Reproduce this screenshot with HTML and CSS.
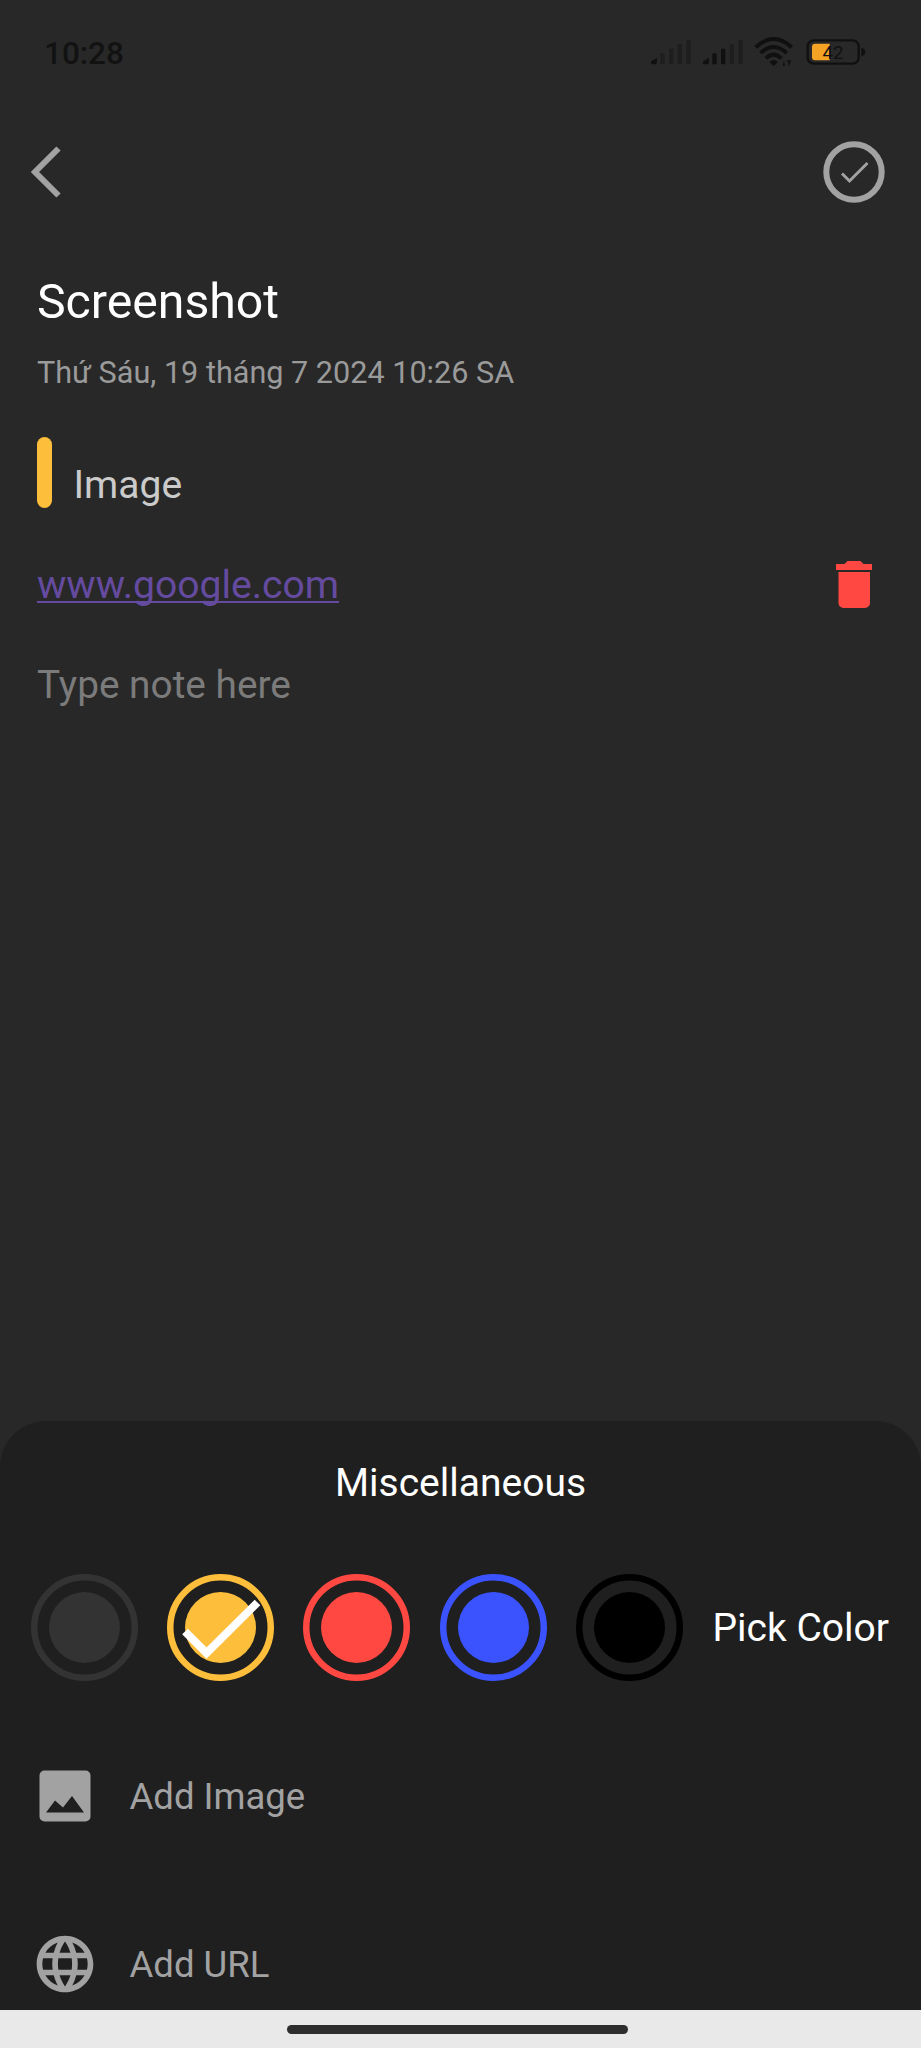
FILE: index.html
```html
<!DOCTYPE html>
<html lang="vi">
<head>
<meta charset="utf-8">
<title>Note</title>
<link rel="stylesheet" href="styles.css">
</head>
<body>
<div class="screen">
  <div class="status">
    <span class="clock">10:28</span>
    <div class="status-icons">
      <svg class="signal" viewBox="0 0 120 78">
        <path class="ink" d="M18 56V70a6 6 0 0 1-6 6H3a6 6 0 0 1-2-9z"/>
        <path class="faint" d="M28 43h13v33H28zM54 29h13v47H54zM80 15h13v61H80zM106 2h13v74h-13z"/>
      </svg>
      <svg class="signal" viewBox="0 0 120 78">
        <path class="ink" d="M18 56V70a6 6 0 0 1-6 6H3a6 6 0 0 1-2-9zM28 43h13v33H28zM54 29h13v47H54z"/>
        <path class="faint" d="M80 15h13v61H80zM106 2h13v74h-13z"/>
      </svg>
      <svg class="wifi" viewBox="0 0 120 90">
        <path class="arc" d="M5 31Q59-19 113 31M20 48Q59 12 98 48M36 64Q59 42 82 64"/>
        <path class="ink" d="M46 75Q59 63 72 75L59 87zM86 87l4-18 3 18zM97 70h14l-6 19-3-13z"/>
      </svg>
      <svg class="battery" viewBox="0 0 178 78">
        <path class="charge" d="M26 14H70V64H26a9 9 0 0 1-9-9V23a9 9 0 0 1 9-9z"/>
        <rect class="shell" x="4" y="4" width="153" height="70" rx="18"/>
        <path class="ink" d="M165 26q12 3 12 13t-12 13z"/>
        <text class="level" x="80" y="60">42</text>
      </svg>
    </div>
  </div>

  <div class="toolbar">
    <svg class="back" viewBox="0 0 30 52"><path d="M27.5 2.5L4 26l23.500 23.500"/></svg>
    <svg class="save" viewBox="0 0 62 62"><circle cx="31" cy="31" r="27.700"/><path d="M19 32.500l7.500 7.500L44.500 22"/></svg>
  </div>

  <div class="note">
    <div class="title">Screenshot</div>
    <div class="date">Thứ Sáu, 19 tháng 7 2024 10:26 SA</div>
    <div class="subtitle"><span class="marker"></span><span class="subtitle-text">Image</span></div>
    <div class="link-row">
      <a class="link">www.google.com</a>
      <svg class="trash" viewBox="0 0 36 47"><path d="M0 3h8.500L11.500 0h13l3 3H36v6H0zM2.500 11H34v31a5 5 0 0 1-5 5H7.500a5 5 0 0 1-5-5z"/></svg>
    </div>
    <div class="placeholder">Type note here</div>
  </div>

  <div class="sheet">
    <div class="sheet-title">Miscellaneous</div>
    <div class="colors">
      <svg class="swatch gray" viewBox="0 0 107 107"><circle class="ring" cx="53.500" cy="53.500" r="50.250"/><circle class="dot" cx="53.500" cy="53.500" r="35.500"/></svg>
      <svg class="swatch yellow" viewBox="0 0 107 107"><circle class="ring" cx="53.500" cy="53.500" r="50.250"/><circle class="dot" cx="53.500" cy="53.500" r="35.500"/><path class="tick" d="M18 57.500L39.500 79L90.500 28.500"/></svg>
      <svg class="swatch red" viewBox="0 0 107 107"><circle class="ring" cx="53.500" cy="53.500" r="50.250"/><circle class="dot" cx="53.500" cy="53.500" r="35.500"/></svg>
      <svg class="swatch blue" viewBox="0 0 107 107"><circle class="ring" cx="53.500" cy="53.500" r="50.250"/><circle class="dot" cx="53.500" cy="53.500" r="35.500"/></svg>
      <svg class="swatch black" viewBox="0 0 107 107"><circle class="ring" cx="53.500" cy="53.500" r="50.250"/><circle class="dot" cx="53.500" cy="53.500" r="35.500"/></svg>
      <span class="pick">Pick Color</span>
    </div>
    <div class="action">
      <svg class="action-icon" viewBox="0 0 68 68"><path fill-rule="evenodd" d="M13.500 8.500h41a5 5 0 0 1 5 5v41a5 5 0 0 1-5 5h-41a5 5 0 0 1-5-5v-41a5 5 0 0 1 5-5zM15 50.500H53L41 34 32 45.500 24 38.500z"/></svg>
      <span>Add Image</span>
    </div>
    <div class="action">
      <svg class="action-icon" viewBox="0 0 24 24"><path d="M11.990 2C6.470 2 2 6.480 2 12s4.470 10 9.990 10C17.520 22 22 17.520 22 12S17.520 2 11.990 2zm6.930 6h-2.950c-.32-1.250-.78-2.450-1.380-3.560 1.840.63 3.370 1.910 4.330 3.560zM12 4.040c.83 1.200 1.480 2.530 1.910 3.960h-3.820c.43-1.430 1.080-2.760 1.910-3.960zM4.260 14C4.100 13.360 4 12.690 4 12s.1-1.360.26-2h3.380c-.08.66-.14 1.320-.14 2 0 .68.06 1.340.14 2H4.260zm.82 2h2.950c.32 1.250.78 2.450 1.380 3.560-1.840-.63-3.370-1.900-4.330-3.560zm2.950-8H5.080c.96-1.660 2.490-2.930 4.330-3.560C8.810 5.550 8.350 6.750 8.030 8zM12 19.960c-.83-1.200-1.480-2.530-1.910-3.960h3.820c-.43 1.430-1.080 2.760-1.910 3.960zM14.340 14H9.660c-.09-.66-.16-1.320-.16-2 0-.68.07-1.350.16-2h4.680c.09.65.16 1.320.16 2 0 .68-.07 1.340-.16 2zm.25 5.560c.6-1.110 1.060-2.310 1.380-3.560h2.950c-.96 1.650-2.490 2.930-4.330 3.560zM16.360 14c.08-.66.14-1.320.14-2 0-.68-.06-1.340-.14-2h3.380c.16.64.26 1.310.26 2s-.1 1.360-.26 2h-3.380z"/></svg>
      <span>Add URL</span>
    </div>
  </div>

  <div class="navbar"><span class="pill"></span></div>
</div>
</body>
</html>
```
FILE: styles.css
```css
* { box-sizing: border-box; }
body { margin: 0; background: #282828; font-family: Roboto, sans-serif; }
svg { display: block; flex: none; }
.screen { width: 921px; height: 2048px; display: flex; flex-direction: column; background: #282828; overflow: hidden; white-space: nowrap; }

.status { height: 106px; display: flex; align-items: center; justify-content: space-between; padding: 0 55px 0 44px; }
.clock { font-size: 31.500px; font-weight: 500; color: #121212; }
.status-icons { display: flex; align-items: center; padding-bottom: 2px; }
.signal { width: 40px; height: 26px; margin-right: 11.500px; }
.wifi { width: 40px; height: 30px; margin-right: 12px; }
.battery { width: 60px; height: 26px; }
.ink { fill: #101010; }
.faint { fill: #1e1e1e; }
.arc { fill: none; stroke: #101010; stroke-width: 12; }
.charge { fill: #f5a324; }
.shell { fill: none; stroke: #101010; stroke-width: 7; }
.level { font-size: 56px; fill: #101010; text-anchor: middle; }

.toolbar { height: 132px; display: flex; align-items: center; justify-content: space-between; padding: 0 36.500px 0 31px; }
.back { width: 30px; height: 52px; }
.save { width: 62px; height: 62px; }
.toolbar svg { fill: none; stroke: #a2a2a2; stroke-width: 6; }
.toolbar .save path { stroke-width: 3; }

.note { height: 1183px; padding: 34px 49px 0 37px; }
.title { font-size: 48.200px; line-height: 60px; color: #fff; }
.date { margin-top: 21px; font-size: 30.600px; line-height: 40px; color: #9a9a9a; }
.subtitle { margin-top: 44px; height: 71px; display: flex; gap: 21.500px; }
.marker { width: 15px; border-radius: 8px; background: #fdbe3b; }
.subtitle-text { font-size: 39px; line-height: 97px; color: #cbcbcb; }
.link-row { margin-top: 46px; height: 60px; display: flex; align-items: center; justify-content: space-between; }
.link { padding-top: 2px; font-size: 39.100px; line-height: 60px; color: #654b9f; text-decoration: underline; text-decoration-skip-ink: none; text-decoration-thickness: 2px; text-underline-offset: 3px; }
.trash { width: 36px; height: 47px; fill: #ff4842; }
.placeholder { margin-top: 41px; font-size: 38.800px; line-height: 60px; color: #7b7b7b; }

.sheet { height: 589px; background: #1f1f1f; border-radius: 46px 46px 0 0; }
.sheet-title { padding-top: 32px; text-align: center; font-size: 39px; line-height: 60px; color: #fff; }
.colors { margin-top: 61px; height: 107px; padding-left: 30.500px; display: flex; align-items: center; gap: 29.400px; }
.swatch { width: 107px; height: 107px; }
.ring { fill: none; stroke: currentColor; stroke-width: 6.500; }
.dot { fill: currentColor; }
.tick { fill: none; stroke: #fff; stroke-width: 8; }
.gray { color: #333; }
.yellow { color: #fdbe3b; }
.red { color: #ff4842; }
.blue { color: #3b53ff; }
.black { color: #000; }
.pick { font-size: 39px; color: #fff; }
.action { height: 68px; margin-top: 81px; padding-left: 30.500px; display: flex; align-items: center; gap: 31px; font-size: 36.500px; color: #a2a2a2; }
.action + .action { margin-top: 100px; }
.action-icon { width: 68px; height: 68px; fill: #a2a2a2; }

.navbar { height: 38px; padding-right: 6px; background: #e9e9e9; display: flex; justify-content: center; align-items: center; }
.pill { width: 341px; height: 9px; border-radius: 5px; background: #2e2e2e; }
```
